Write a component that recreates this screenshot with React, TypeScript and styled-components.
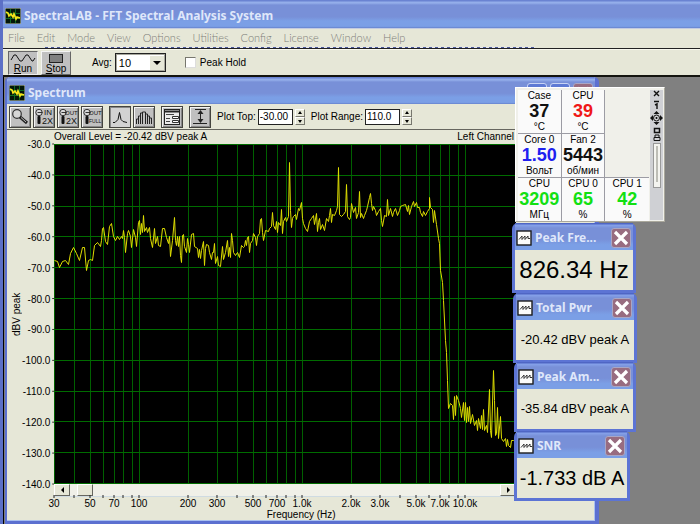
import React from "react";
import styled, { createGlobalStyle } from "styled-components";

const beige = "#e6e7d7";
const ui = `"Liberation Sans", Arial, sans-serif`;
const caption = `"Noto Sans", "Open Sans", sans-serif`;

const GlobalStyle = createGlobalStyle`
  * { box-sizing: border-box; }
  body { margin: 0; background: #808080; font-family: ${ui}; font-size: 10px; color: #000; }
  button, input, select { font: inherit; color: inherit; margin: 0; }
`;

const MainWindow = styled.div`
  position: relative;
  min-height: 100vh;
  display: flex;
  flex-direction: column;
  border-left: 3px solid #5c70c6;
  overflow: hidden;
`;

const TitleBar = styled.header<{ $height: number }>`
  flex: none;
  height: ${(p) => p.$height}px;
  display: flex;
  align-items: center;
  gap: 3px;
  padding: 4px 2px 0;
  background: linear-gradient(#6a83d2 0 1px, #94aeea 2px 3px, #7890d8 5px 60%, #7b9fe6 75% 94%, #6682cc);
`;

const Title = styled.h1`
  margin: 0;
  flex: 1;
  min-width: 0;
  white-space: nowrap;
  font: 700 12px/18px ${caption};
  color: #dfe7fa;
`;

const MenuBar = styled.nav`
  flex: none;
  height: 19px;
  display: flex;
  align-items: center;
  gap: 12px;
  padding-left: 5px;
  background: ${beige};
  border-top: 1px solid #c3cbe0;
`;

const MenuItem = styled.button`
  padding: 0;
  border: 0;
  background: none;
  font: 300 11px/16px Lato, ${caption};
  color: #80807a;
`;

const DashRule = styled.div`
  flex: none;
  height: 2px;
  background:
    repeating-linear-gradient(90deg, #4c5a9c 0 3px, #e6e7f0 3px 6px) 42px 0 / 490px 1px no-repeat,
    linear-gradient(${beige} 0 1px, #222 1px 2px);
`;

const Toolbar = styled.div`
  flex: none;
  height: 28px;
  display: flex;
  align-items: center;
  gap: 3px;
  padding: 0 5px;
  background: ${beige};
  border-top: 1px solid #f8f8ee;
  border-bottom: 2px solid #14140f;
`;

const BigButton = styled.button<{ $pressed?: boolean }>`
  width: 30px;
  height: 24px;
  padding: 0;
  display: flex;
  flex-direction: column;
  align-items: center;
  background: #c0c0c0;
  border: 1px solid;
  border-color: ${(p) => (p.$pressed ? "#666 #eee #eee #666" : "#f4f4f4 #666 #666 #f4f4f4")};
  font: 10px/10px ${ui};
`;

const AvgField = styled.label`
  display: flex;
  align-items: center;
  gap: 3px;
  margin: 0 16px 0 18px;
  font: 10px/14px ${ui};
`;

const AvgBox = styled.span`
  display: grid;
  grid-template-columns: 1fr 16px;
  align-items: center;
  width: 51px;
  height: 19px;
  border: 1px solid #222;
  outline: 1px solid #a8a89e;
  outline-offset: -2px;
  background: #fff;
`;

const AvgSelect = styled.select`
  grid-area: 1 / 1 / 2 / 3;
  appearance: none;
  width: 100%;
  height: 16px;
  padding: 0 3px;
  border: 0;
  background: none;
  font: 11px/16px ${ui};
`;

const DropMark = styled.svg`
  grid-area: 1 / 2;
  width: 16px;
  height: 16px;
  background: ${beige};
  border: 1px solid;
  border-color: #fff #77776e #77776e #fff;
  pointer-events: none;
`;

const CheckField = styled.label`
  display: flex;
  align-items: center;
  gap: 4px;
  font: 10px/14px ${ui};
`;

const Tick = styled.input`
  appearance: none;
  width: 11px;
  height: 11px;
  background: #fff;
  border: 1px solid;
  border-color: #77776e #ddd #ddd #77776e;
  &:checked { background: #333; }
`;

const Workspace = styled.main`
  flex: 1;
  display: flex;
  padding: 0 101px 3px 1px;
  background: #808080;
  border-left: 1px solid #000;
`;

const ChildWindow = styled.section`
  flex: 1;
  min-width: 0;
  display: flex;
  flex-direction: column;
  background: ${beige};
  border: 4px solid #5c70d0;
  border-width: 0 4px 4px 2px;
  border-radius: 5px 5px 0 0;
  box-shadow: inset -1px -1px #a9c0f0;
  overflow: hidden;
`;

const CaptionButton = styled.button<{ $close?: boolean }>`
  width: 20px;
  height: 20px;
  flex: none;
  display: grid;
  place-items: center;
  padding: 0;
  border: 1px solid ${(p) => (p.$close ? "#a9a6c4" : "#c8d4f4")};
  border-radius: 3px;
  background: ${(p) => (p.$close ? "#986c80" : "#5e7ad4")};
`;

const IconBar = styled.div`
  flex: none;
  height: 26px;
  display: flex;
  align-items: center;
  padding: 0 2px;
  border-bottom: 1px solid #66665f;
`;

const IconGroup = styled.div`
  display: flex;
  gap: 2px;
  margin-right: 6px;
`;

const ToolButton = styled.button<{ $pressed?: boolean }>`
  width: 22px;
  height: 22px;
  padding: 0;
  background: ${(p) => (p.$pressed ? "#d2d2d2" : "#c0c0c0")};
  border: 1px solid #44443f;
  box-shadow: ${(p) => (p.$pressed ? "inset 1px 1px #888" : "inset 1px 1px #f4f4f4, inset -1px -1px #888")};
  svg { display: block; }
`;

const NumberField = styled.label`
  display: flex;
  align-items: center;
  gap: 2px;
  margin-right: 6px;
  white-space: nowrap;
  font: 10px/14px ${ui};
`;

const NumberInput = styled.input`
  width: 35px;
  height: 16px;
  padding: 0 1px;
  border: 1px solid #222;
  background: #fff;
  font: 10px/14px ${ui};
`;

const Spinner = styled.span`
  display: flex;
  flex-direction: column;
`;

const SpinButton = styled.button`
  width: 10px;
  height: 8px;
  padding: 0;
  background: ${beige};
  border: 1px solid;
  border-color: #fff #77776e #77776e #fff;
  svg { display: block; }
`;

const ChartArea = styled.div`
  flex: 1;
  display: grid;
  grid-template-columns: 47px 1fr;
  grid-template-rows: 14px 1fr 13px 24px;
  padding-right: 79px;
`;

const ChartHead = styled.div`
  grid-column: 2;
  display: flex;
  justify-content: space-between;
  padding-right: 2px;
  white-space: nowrap;
  font: 10px/13px ${ui};
`;

const YAxis = styled.div`
  grid-column: 1;
  display: flex;
  padding-left: 3px;
`;

const YTitle = styled.div`
  writing-mode: vertical-rl;
  transform: rotate(180deg);
  text-align: center;
  width: 14px;
  font: 10px/14px ${ui};
`;

const AxisSvg = styled.svg`
  display: block;
  flex: 1;
  min-width: 0;
  width: 100%;
  height: 100%;
  overflow: visible;
  font: 10px ${ui};
`;

const PlotSvg = styled.svg`
  grid-column: 2;
  display: block;
  width: 100%;
  height: 100%;
  min-height: 200px;
  background: #000;
`;

const ScrollRow = styled.div`
  grid-column: 2;
  display: flex;
  height: 13px;
  background: #f0f0e8;
  border-bottom: 1px solid #cfdbe2;
`;

const ScrollButton = styled.button`
  width: 16px;
  height: 12px;
  padding: 0;
  background: ${beige};
  border: 1px solid;
  border-color: #fff #66665f #66665f #fff;
  display: grid;
  place-items: center;
`;

const ScrollTrack = styled.div`
  flex: 1;
  padding-left: 7px;
`;

const ScrollThumb = styled.div`
  width: 16px;
  height: 12px;
  background: ${beige};
  border: 1px solid;
  border-color: #fff #66665f #66665f #fff;
`;

const XAxis = styled.div`
  grid-column: 2;
`;

const Readout = styled.section<{ $x: number; $y: number; $w: number }>`
  position: absolute;
  left: ${(p) => p.$x}px;
  top: ${(p) => p.$y}px;
  width: ${(p) => p.$w}px;
  background: ${beige};
  border: 3px solid #5c74d4;
  border-width: 0 3px 3px;
  border-radius: 6px 6px 0 0;
`;

const ReadoutBar = styled.header`
  height: 27px;
  display: flex;
  align-items: center;
  gap: 3px;
  padding: 3px 2px 0 1px;
  background: linear-gradient(#4f66c4 0 1px, #86a2ea 2px, #7890d8 5px 60%, #7b9fe6 80%);
`;

const ReadoutValue = styled.output<{ $size: number }>`
  display: block;
  text-align: center;
  white-space: nowrap;
  font: ${(p) => p.$size}px/40px ${ui};
`;

const Monitor = styled.aside`
  position: absolute;
  left: 512px;
  top: 87px;
  width: 150px;
  height: 135px;
  display: flex;
  gap: 1px;
  padding: 2px 1px 1px 2px;
  background: #f0f0ea;
  border: 1px solid;
  border-color: #fff #aaa89c #aaa89c #fff;
`;

const SensorGrid = styled.div`
  flex: 1;
  display: grid;
  grid-template-columns: repeat(3, 1fr);
  grid-template-rows: repeat(3, 1fr);
`;

const Sensor = styled.div<{ $blank?: boolean; $lastRow?: boolean }>`
  display: flex;
  flex-direction: column;
  align-items: center;
  background: ${(p) => (p.$blank ? "transparent" : "#fafafa")};
  border-right: ${(p) => (p.$blank ? 0 : 1)}px solid #9c9ca4;
  border-bottom: ${(p) => (p.$lastRow || p.$blank ? 0 : 1)}px solid #9c9ca4;
  &:nth-child(6) { border-bottom: 1px solid #9c9ca4; }
  &:last-child { border-right: 0; }
`;

const SensorText = styled.div`
  font: 10px/12px ${ui};
  white-space: nowrap;
`;

const SensorValue = styled.div<{ $color: string }>`
  font: 700 18px/19px ${ui};
  color: ${(p) => p.$color};
`;

const MonitorStrip = styled.div`
  width: 13px;
  background: #cfd0d4;
  svg { display: block; }
`;

const AppIcon = () => (
  <svg width="16" height="16" viewBox="0 0 16 16" aria-hidden="true">
    <rect width="16" height="16" fill="#03160a" stroke="#c8ccb8" />
    <path d="M1 5.5h14M1 10.5h14M5.5 1v14M10.5 1v14" stroke="#0c6a22" />
    <path d="M1 4l2 1 1 3 2-2 2 3 1-3 2 5 1-2 3 1" fill="none" stroke="#f5e51a" strokeWidth="1.7" />
  </svg>
);

const WaveIcon = () => (
  <svg width="16" height="16" viewBox="0 0 16 16" aria-hidden="true">
    <rect x="1" y="1" width="14" height="14" fill="#fcfcfa" stroke="#1c1c1c" strokeWidth="1.4" />
    <path d="M3 9.500l3-3.500v3.500l3-3.500v3.500l3-3.500v2.500h2" fill="none" stroke="#333" />
  </svg>
);

const CloseMark = ({ size }: { size: number }) => (
  <svg width={size} height={size} viewBox="0 0 16 16" aria-hidden="true">
    <path d="M2 2l12 12M14 2L2 14" stroke="#fff" strokeWidth="3.2" />
  </svg>
);

const Arrow = ({ d, w, h }: { d: string; w: number; h: number }) => (
  <svg width={w} height={h} viewBox={`0 0 ${w} ${h}`} aria-hidden="true"><path d={d} /></svg>
);

const Zoomer = ({ top, bottom }: { top: string; bottom: string }) => {
  const full = bottom === "FULL";
  return (
    <svg width="20" height="20" viewBox="0 0 20 20" aria-hidden="true">
      <circle cx="5" cy="5.500" r="3.200" fill="#d8d8d8" stroke="#333" />
      <path d="M3.500 5.500h5" stroke="#333" />
      <rect x="3.500" y="9" width="3" height="8" rx="1" fill="#111" />
      <text x={top === "IN" ? 10 : 7} y="8" fontSize={top === "IN" ? 8 : 6} fill="#111">{top}</text>
      <text x={full ? 7 : 8} y={full ? 16 : 17} fontSize={full ? 5 : 9} fill="#111">{bottom}</text>
    </svg>
  );
};

const MagnifierIcon = () => (
  <svg width="20" height="20" viewBox="0 0 20 20" aria-hidden="true">
    <circle cx="7" cy="7" r="4.3" fill="#d6d6d6" stroke="#333" strokeWidth="1.2" />
    <path d="M10 10l7 6" stroke="#222" strokeWidth="3" /><path d="M11 10.5l5 4.5" stroke="#bbb" />
  </svg>
);

const LineIcon = () => (
  <svg width="20" height="20" viewBox="0 0 20 20" aria-hidden="true">
    <path d="M3 15.500h2l3-3 1.500-7 1.500 7 2 2 4 1" fill="none" stroke="#111" />
  </svg>
);

const BarsIcon = () => (
  <svg width="20" height="20" viewBox="0 0 20 20" aria-hidden="true">
    <path d="M2.500 17v-5h2v5v-8h2v8v-11h2v11v-12h3v12v-10h2v10v-8h2v8v-6h2v6" fill="none" stroke="#222" />
  </svg>
);

const OptionsIcon = () => (
  <svg width="20" height="20" viewBox="0 0 20 20" aria-hidden="true">
    <rect x="2.500" y="2.500" width="15" height="15" fill="#ececec" stroke="#222" />
    <path d="M3 4.500h14" stroke="#222" strokeWidth="2" />
    <path d="M4 7.500h8M4 11.500h4M4 14.500h4" stroke="#444" />
    <path d="M10.500 9.500h6v2h-6zM10.500 13.500h6v2h-6z" fill="#fff" stroke="#333" />
  </svg>
);

const RangeIcon = () => (
  <svg width="20" height="20" viewBox="0 0 20 20" aria-hidden="true">
    <path d="M5 2.500h11M3 16.500h14M10.500 4v11" stroke="#222" />
    <path d="M10.500 3l-3 4h6zM10.500 16l-3-4h6z" fill="#222" />
  </svg>
);

const frequencies = [30, 40, 50, 60, 70, 80, 90, 100, 200, 300, 400, 500, 600, 700, 800, 900, 1000, 2000, 3000, 4000, 5000, 6000, 7000, 8000, 9000, 10000];
const frequencyLabels: Record<number, string> = {
  30: "30", 50: "50", 70: "70", 100: "100", 200: "200", 300: "300", 500: "500", 700: "700",
  1000: "1.0k", 2000: "2.0k", 3000: "3.0k", 5000: "5.0k", 7000: "7.0k", 10000: "10.0k",
};
const levels = [-30, -40, -50, -60, -70, -80, -90, -100, -110, -120, -130, -140];
const PLOT_W = 462;
const PLOT_H = 340;
const DECADE = 163;
const freqX = (f: number) => Math.round(DECADE * Math.log10(f / 30));
const levelY = (l: number) => ((-30 - l) / 110) * 100;

const trace =
  "54,260 57,261 59,267 62,261 65,260 68,264 70,253 73,247 76,253 79,260 82,247 84,247 86,270 88,260 90,259 92,260 94,245 97,242 100,246 101,240 102,228 103,227 105,241 107,244 109,226 111,223 113,236 115,240 117,236 119,239 121,236 122,238 123,230 124,237 125,252 127,233 128,230 130,236 131,247 133,229 135,237 136,246 138,222 139,220 140,234 141,223 142,232 143,215 144,231 146,227 147,232 149,227 150,238 152,247 154,228 155,243 157,236 158,245 160,246 162,228 164,228 166,237 168,243 169,236 170,256 172,240 174,217 175,240 176,245 177,236 178,246 179,236 180,255 181,262 182,235 183,234 184,246 186,252 187,238 188,244 189,252 191,234 193,233 194,246 197,248 198,257 199,249 200,258 201,250 203,241 204,265 205,248 206,244 208,245 209,252 211,259 212,252 213,252 214,243 215,263 217,256 218,265 220,266 222,246 223,259 225,252 227,240 228,256 229,247 230,257 231,233 232,240 233,252 235,255 237,252 239,257 241,245 243,247 244,246 245,240 246,245 247,237 248,236 249,252 250,243 252,240 253,233 255,237 256,245 257,236 259,233 260,219 261,218 262,232 263,240 265,230 268,231 269,228 271,226 272,212 273,225 275,229 276,221 277,232 278,222 280,225 281,209 282,233 283,221 285,217 286,221 288,216 " +
  "289,162 290,210 291,227 292,218 293,216 295,214 296,219 298,208 299,210 301,202 302,218 303,223 305,228 307,231 309,221 311,218 313,215 314,224 316,213 317,231 318,222 319,218 320,229 322,224 324,230 326,218 328,221 329,215 330,208 331,222 332,214 334,215 336,210 337,206 338,167 339,214 341,216 343,214 345,211 346,184 347,216 349,219 350,217 351,203 353,212 355,207 356,218 358,212 359,191 360,217 361,213 363,218 364,215 366,210 367,206 369,197 370,193 371,203 372,210 373,206 375,210 376,215 378,211 380,208 381,220 382,226 384,215 386,216 387,199 388,215 390,208 392,216 393,212 395,208 397,215 399,210 400,206 402,205 405,204 407,211 408,205 409,214 411,206 413,201 414,206 416,202 417,207 419,207 420,212 422,216 423,211 425,215 427,211 429,208 429,197 430,207 432,209 433,222 434,210 436,224 438,238 439,243 440,270 442,282 " +
  "443,300 445,340 446,352 447,380 448,408 450,403 452,405 453,419 454,396 455,415 456,395 458,400 460,408 461,417 463,402 464,420 465,402 466,422 467,407 468,421 469,406 470,423 472,414 474,425 476,420 477,430 478,418 480,428 481,415 482,429 483,409 484,430 486,425 487,432 489,389 490,430 491,437 493,370 494,400 495,435 496,433 497,407 498,438 500,416 501,438 503,441 505,438 506,446 507,439 508,445 510,447 511,440 513,440 516,441";

const menus = ["File", "Edit", "Mode", "View", "Options", "Utilities", "Config", "License", "Window", "Help"];

const readouts = [
  { title: "Peak Fre...", value: "826.34 Hz", x: 509, y: 223, w: 124, size: 24 },
  { title: "Total Pwr", value: "-20.42 dBV peak A", x: 510, y: 293, w: 124, size: 13 },
  { title: "Peak Am...", value: "-35.84 dBV peak A", x: 511, y: 362, w: 122, size: 13 },
  { title: "SNR", value: "-1.733 dB A", x: 511, y: 431, w: 116, size: 20 },
];

const sensors = [
  { name: "Case", value: "37", unit: "°C", color: "#111" },
  { name: "CPU", value: "39", unit: "°C", color: "#f01818" },
  null,
  { name: "Core 0", value: "1.50", unit: "Вольт", color: "#2020f0" },
  { name: "Fan 2", value: "5443", unit: "об/мин", color: "#111" },
  null,
  { name: "CPU", value: "3209", unit: "МГц", color: "#12e012" },
  { name: "CPU 0", value: "65", unit: "%", color: "#12e012" },
  { name: "CPU 1", value: "42", unit: "%", color: "#12e012" },
];

function NumberControl({ label, value }: { label: string; value: string }) {
  const id = label.replace(" ", "-").toLowerCase();
  return (
    <NumberField htmlFor={id}>
      {label}:
      <NumberInput id={id} defaultValue={value} />
      <Spinner>
        <SpinButton aria-label={`${label} up`}><Arrow w={8} h={6} d="M4 1l2 3h-4z" /></SpinButton>
        <SpinButton aria-label={`${label} down`}><Arrow w={8} h={6} d="M4 5l2-3h-4z" /></SpinButton>
      </Spinner>
    </NumberField>
  );
}

function SpectrumChart() {
  return (
    <ChartArea>
      <ChartHead><span>Overall Level = -20.42 dBV peak A</span><span>Left Channel</span></ChartHead>
      <YAxis>
        <YTitle>dBV peak</YTitle>
        <AxisSvg>
          {levels.map((l) => (
            <text key={l} x="88%" y={`${levelY(l)}%`} dy="4" textAnchor="end">{l.toFixed(1)}</text>
          ))}
          {levels.map((l) => (
            <line key={l} x1="94%" x2="100%" y1={`${levelY(l)}%`} y2={`${levelY(l)}%`} stroke="#333" />
          ))}
        </AxisSvg>
      </YAxis>
      <PlotSvg viewBox={`0 0 ${PLOT_W} ${PLOT_H}`} preserveAspectRatio="none" role="img" aria-label="Spectrum, level against frequency">
        {frequencies.map((f) => (
          <line key={f} x1={freqX(f) + 0.5} x2={freqX(f) + 0.5} y1="0" y2={PLOT_H} stroke="#006000" />
        ))}
        {levels.map((l) => {
          const y = Math.round((levelY(l) * 339) / 100) + 0.5;
          return <line key={l} x1="0" x2={PLOT_W} y1={y} y2={y} stroke="#006c00" />;
        })}
        <polyline points={trace} transform="translate(-53.5 -143.500)" fill="none" stroke="#dede00" strokeWidth="1" />
      </PlotSvg>
      <ScrollRow>
        <ScrollButton aria-label="Scroll left"><Arrow w={5} h={6} d="M4 0v6l-3-3z" /></ScrollButton>
        <ScrollTrack><ScrollThumb /></ScrollTrack>
        <ScrollButton aria-label="Scroll right"><Arrow w={5} h={6} d="M1 0v6l3-3z" /></ScrollButton>
      </ScrollRow>
      <XAxis>
        <AxisSvg>
          {frequencies.map((f) => {
            const x = `${(freqX(f) / PLOT_W) * 100}%`;
            return (
              <g key={f}>
                <line x1={x} x2={x} y1="-2" y2="1" stroke="#222" />
                {frequencyLabels[f] && <text x={x} y="10" textAnchor="middle">{frequencyLabels[f]}</text>}
              </g>
            );
          })}
          <text x="53.5%" y="21" textAnchor="middle">Frequency (Hz)</text>
        </AxisSvg>
      </XAxis>
    </ChartArea>
  );
}

function SensorMonitor() {
  return (
    <Monitor>
      <SensorGrid>
        {sensors.map((s, i) =>
          s ? (
            <Sensor key={i} $lastRow={i > 5}>
              <SensorText>{s.name}</SensorText>
              <SensorValue $color={s.color}>{s.value}</SensorValue>
              <SensorText>{s.unit}</SensorText>
            </Sensor>
          ) : (
            <Sensor key={i} $blank />
          )
        )}
      </SensorGrid>
      <MonitorStrip>
        <svg width="13" height="130" viewBox="0 0 13 130" aria-hidden="true">
          <path d="M4 1l5 5M9 1l-5 5M4 11.500h5M5 15l2-1v5" stroke="#111" strokeWidth="1.400" fill="none" />
          <path d="M6.500 21l3 3h-6zM6.500 35l3-3h-6zM0 28l3-3v6zM13 28l-3-3v6z" fill="#111" />
          <circle cx="6.500" cy="28" r="3" fill="none" stroke="#111" /><circle cx="6.500" cy="28" r="1" />
          <path d="M4.500 38.500h5v4h-5z" fill="none" stroke="#111" strokeWidth="1.500" />
          <path d="M4 47.500h6v3h-6zM5 47v-2h4v2" fill="none" stroke="#111" />
          <rect x="3.500" y="53.500" width="7" height="44" fill="#f4f4f0" stroke="#999" />
          <path d="M7 56v36" stroke="#bdbdb6" strokeWidth="2" />
        </svg>
      </MonitorStrip>
    </Monitor>
  );
}

export default function App() {
  return (
    <MainWindow>
      <GlobalStyle />
      <TitleBar $height={28}><AppIcon /><Title>SpectraLAB - FFT Spectral Analysis System</Title></TitleBar>
      <MenuBar>{menus.map((m) => <MenuItem key={m}>{m}</MenuItem>)}</MenuBar>
      <DashRule />
      <Toolbar>
        <BigButton $pressed>
          <svg width="26" height="12" viewBox="0 0 26 12" aria-hidden="true"><path d="M1 8l3-5h2l4 6h2l4-6h2l4 6h1l2-3" fill="none" stroke="#111" /></svg>
          <span><u>R</u>un</span>
        </BigButton>
        <BigButton>
          <svg width="26" height="12" viewBox="0 0 26 12" aria-hidden="true"><rect x="6.500" y="2.500" width="13" height="8" fill="#808080" stroke="#222" /></svg>
          <span><u>S</u>top</span>
        </BigButton>
        <AvgField>
          Avg:
          <AvgBox>
            <AvgSelect defaultValue="10"><option>1</option><option>10</option><option>100</option></AvgSelect>
            <DropMark viewBox="0 0 14 14"><path d="M3 5h8l-4 4z" /></DropMark>
          </AvgBox>
        </AvgField>
        <CheckField><Tick type="checkbox" />Peak Hold</CheckField>
      </Toolbar>
      <Workspace>
        <ChildWindow>
          <TitleBar $height={27}>
            <AppIcon /><Title as="h2">Spectrum</Title>
            <CaptionButton aria-label="Minimize"><Arrow w={12} h={12} d="M2 8h6v2h-6z" /></CaptionButton>
            <CaptionButton aria-label="Maximize"><Arrow w={12} h={12} d="M1 1h10v10h-10zM2 3v7h8v-7z" /></CaptionButton>
            <CaptionButton $close aria-label="Close"><CloseMark size={14} /></CaptionButton>
          </TitleBar>
          <IconBar>
            <IconGroup>
              <ToolButton aria-label="Zoom"><MagnifierIcon /></ToolButton>
              <ToolButton aria-label="Zoom in 2X"><Zoomer top="IN" bottom="2X" /></ToolButton>
              <ToolButton aria-label="Zoom out 2X"><Zoomer top="OUT" bottom="2X" /></ToolButton>
              <ToolButton aria-label="Zoom out full"><Zoomer top="OUT" bottom="FULL" /></ToolButton>
            </IconGroup>
            <IconGroup>
              <ToolButton $pressed aria-label="Line plot"><LineIcon /></ToolButton>
              <ToolButton aria-label="Bar plot"><BarsIcon /></ToolButton>
            </IconGroup>
            <IconGroup><ToolButton aria-label="Options"><OptionsIcon /></ToolButton></IconGroup>
            <IconGroup><ToolButton aria-label="Auto range"><RangeIcon /></ToolButton></IconGroup>
            <NumberControl label="Plot Top" value="-30.00" />
            <NumberControl label="Plot Range" value="110.0" />
          </IconBar>
          <SpectrumChart />
        </ChildWindow>
      </Workspace>
      {readouts.map((r) => (
        <Readout key={r.title} $x={r.x} $y={r.y} $w={r.w}>
          <ReadoutBar>
            <WaveIcon />
            <Title as="h2">{r.title}</Title>
            <CaptionButton $close aria-label={`Close ${r.title}`}><CloseMark size={16} /></CaptionButton>
          </ReadoutBar>
          <ReadoutValue $size={r.size}>{r.value}</ReadoutValue>
        </Readout>
      ))}
      <SensorMonitor />
    </MainWindow>
  );
}
